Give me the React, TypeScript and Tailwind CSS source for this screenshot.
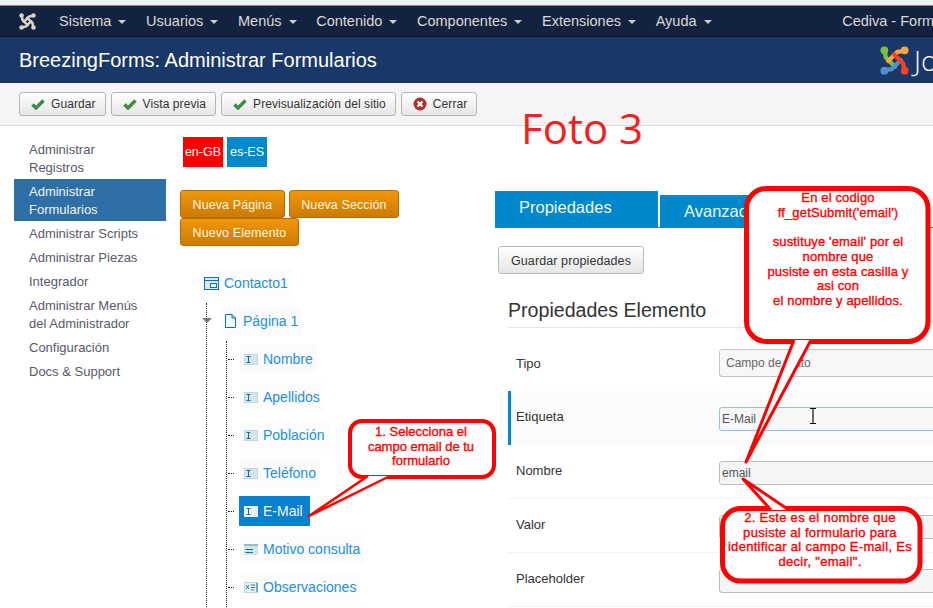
const font = "font-['Liberation_Sans',Arial,sans-serif]";

const navItems = ["Sistema", "Usuarios", "Menús", "Contenido", "Componentes", "Extensiones", "Ayuda"];
const sideItems = [
  { label: ["Administrar", "Registros"] },
  { label: ["Administrar", "Formularios"], active: true },
  { label: ["Administrar Scripts"] },
  { label: ["Administrar Piezas"] },
  { label: ["Integrador"] },
  { label: ["Administrar Menús", "del Administrador"] },
  { label: ["Configuración"] },
  { label: ["Docs & Support"] },
];
const fields = [
  { name: "Nombre", icon: "input" },
  { name: "Apellidos", icon: "input" },
  { name: "Población", icon: "input" },
  { name: "Teléfono", icon: "input" },
  { name: "E-Mail", icon: "input", active: true },
  { name: "Motivo consulta", icon: "select" },
  { name: "Observaciones", icon: "area" },
];

function JoomlaMark({ size, mono }: { size: number; mono?: boolean }) {
  const c = mono
    ? ["#d8d4cc", "#d8d4cc", "#d8d4cc", "#d8d4cc"]
    : ["#7ac143", "#f9a541", "#f44321", "#5091cd"];
  return (
    <svg width={size} height={size} viewBox="0 0 30 30" className="shrink-0">
      <g fill="none" strokeWidth="4.4" strokeLinecap="round" strokeLinejoin="round">
        <path d="M5 5 L6 12 L15.5 21.5" stroke={c[0]} />
        <path d="M25 5 L18 6 L8.5 15.5" stroke={c[1]} />
        <path d="M5 25 L12 24 L21.5 14.5" stroke={c[3]} />
        <path d="M25 25 L24 18 L14.5 8.5" stroke={c[2]} />
      </g>
      <circle cx="4.5" cy="4.5" r="4" fill={c[0]} />
      <circle cx="25.5" cy="4.5" r="4" fill={c[1]} />
      <circle cx="25.5" cy="25.5" r="4" fill={c[2]} />
      <circle cx="4.5" cy="25.5" r="4" fill={c[3]} />
    </svg>
  );
}

function Check() {
  return (
    <svg width="14" height="12" viewBox="0 0 14 12">
      <path d="M1.5 6.5 L5 10 L12.5 2.5" fill="none" stroke="#3f8a45" strokeWidth="3.4" />
    </svg>
  );
}

function CloseIcon() {
  return (
    <svg width="14" height="14" viewBox="0 0 14 14">
      <circle cx="7" cy="7" r="6.5" fill="#a8312d" />
      <path d="M4.5 4.5 L9.5 9.5 M9.5 4.5 L4.5 9.5" stroke="#fff" strokeWidth="2" />
    </svg>
  );
}

function FieldIcon({ kind, active }: { kind: string; active?: boolean }) {
  const fill = active ? "#eef4f6" : "#d6e5ea";
  const blue = "#0a6fb5";
  if (kind === "select") {
    return (
      <svg width="14" height="11" viewBox="0 0 14 11" className="shrink-0">
        <rect x="0" y="0" width="14" height="11" fill={fill} />
        <rect x="0" y="0" width="14" height="2" fill="#9fb8c4" />
        <path d="M1.5 5.5 H9 M1.5 8.5 H9" stroke={blue} strokeWidth="1" />
      </svg>
    );
  }
  if (kind === "area") {
    return (
      <svg width="14" height="11" viewBox="0 0 14 11" className="shrink-0">
        <rect x="0.5" y="0.5" width="13" height="10" fill="#eaf2f5" stroke="#c4d6de" />
        <path d="M2 3 L5 7 M5 3 L2 7 M7 3 H11 M7 5.5 H11 M7 8 H10" stroke={blue} strokeWidth="0.9" />
        <path d="M13 1 V10" stroke={blue} strokeWidth="1" />
      </svg>
    );
  }
  return (
    <svg width="14" height="11" viewBox="0 0 14 11" className="shrink-0">
      <rect x="0.5" y="0.5" width="13" height="10" fill={fill} stroke={active ? "#eef4f6" : "#c4d6de"} />
      <path d="M2.5 2.5 H6.5 M2.5 8.5 H6.5 M4.5 2.5 V8.5" stroke={blue} strokeWidth="1" fill="none" />
    </svg>
  );
}

function NavBar() {
  return (
    <div className="flex h-[31px] items-center border-b border-[#0c1a30] bg-[#13233f] pt-[1px] text-[14.5px] text-[#d9d9d9]">
      <div className="ml-[19px] mr-[23px]">
        <JoomlaMark size={17} mono />
      </div>
      {navItems.map((item) => (
        <div key={item} className="mr-[19.7px] flex items-center gap-[7px] whitespace-nowrap">
          {item}
          <span className="mt-[1px] h-0 w-0 border-x-4 border-t-4 border-x-transparent border-t-[#cccccc]" />
        </div>
      ))}
      <div className="ml-[111px] whitespace-nowrap">Cediva - Formularios</div>
    </div>
  );
}

function Header() {
  return (
    <div className="flex h-[46px] items-center bg-[#1a3867] pl-[19px] text-white">
      <h1 className="w-[861px] shrink-0 text-[20px] leading-none">BreezingForms: Administrar Formularios</h1>
      <JoomlaMark size={29} />
      <span className="ml-[5px] font-['Open_Sans',sans-serif] text-[28px] font-light leading-none">Joomla!</span>
    </div>
  );
}

function ToolButton({ label, icon }: { label: string; icon: "check" | "close" }) {
  return (
    <button className="flex h-[24px] items-center gap-[6px] rounded-[3px] border border-[#b5b5b5] bg-gradient-to-b from-white to-[#e6e6e6] pl-[11px] pr-[9px] text-[12px] tracking-[0.08px] text-[#333333]">
      {icon === "check" ? <Check /> : <CloseIcon />}
      {label}
    </button>
  );
}

function Toolbar() {
  return (
    <div className="flex h-[43px] items-start gap-[5px] border-b border-[#dddddd] bg-[#f5f5f5] pl-[19px] pt-[9px]">
      <ToolButton label="Guardar" icon="check" />
      <ToolButton label="Vista previa" icon="check" />
      <ToolButton label="Previsualización del sitio" icon="check" />
      <ToolButton label="Cerrar" icon="close" />
    </div>
  );
}

function Sidebar() {
  return (
    <ul className="ml-[14px] w-[152px] shrink-0 pt-[11px] text-[13px] leading-[18px] text-[#58586a]">
      {sideItems.map((item) => (
        <li
          key={item.label.join(" ")}
          className={item.active ? "bg-[#2f6fa8] pb-[2px] pl-[15px] pt-[4px] text-[#f2f2f2]" : "pb-[2px] pl-[15px] pt-[4px]"}
        >
          {item.label.map((line) => (
            <div key={line} className="whitespace-nowrap">{line}</div>
          ))}
        </li>
      ))}
    </ul>
  );
}

function OrangeButton({ label }: { label: string }) {
  return (
    <button className="h-[28px] whitespace-nowrap rounded-[3px] border border-[#b86e05] bg-gradient-to-b from-[#f29607] to-[#cc7b02] px-[11.5px] pt-[2px] text-[12.5px] tracking-[0.1px] text-[#fdf5e6]">
      {label}
    </button>
  );
}

function TreeBox({ children, className }: { children: React.ReactNode; className?: string }) {
  return (
    <div className={`flex h-[28px] w-fit items-center gap-[5px] bg-[#fbfbfb] px-[4px] text-[14px] text-[#2490dc] ${className ?? ""}`}>
      {children}
    </div>
  );
}

function Tree() {
  return (
    <div className="mt-[23px]">
      <TreeBox className="ml-[20px] gap-[4px]">
        <svg width="15" height="13" viewBox="0 0 15 13">
          <rect x="0.5" y="0.5" width="14" height="12" fill="#dbe8ee" stroke="#0a6fb5" />
          <path d="M0.5 3.5 H14.5" stroke="#0a6fb5" />
          <rect x="6.5" y="6.5" width="6" height="4" fill="#f4f8fa" stroke="#0a6fb5" />
        </svg>
        Contacto1
      </TreeBox>
      <div className="relative ml-[26px] mt-[6px] border-l border-dotted border-[#222222] pl-[13px] pt-[4px]">
        <span className="absolute left-[-5px] top-[15px] h-0 w-0 border-x-[5px] border-t-[5px] border-x-transparent border-t-[#777777]" />
        <TreeBox className="pl-[5px]">
          <svg width="11" height="14" viewBox="0 0 11 14" className="mr-[2px]">
            <path d="M0.5 0.5 H7 L10.5 4 V13.5 H0.5 Z" fill="#f4f8fa" stroke="#0a6fb5" />
            <path d="M7 0.5 V4 H10.5" fill="none" stroke="#0a6fb5" />
          </svg>
          Página 1
        </TreeBox>
        <ul className="ml-[6px] mt-[6px] border-l border-dotted border-[#222222] pb-[12px] pt-[4px]">
          {fields.map((f) => (
            <li key={f.name} className="mb-[10px] flex items-center pl-[1px]">
              <span className="mr-[6px] w-[6px] border-t border-dotted border-[#222222]" />
              {f.active ? (
                <div className="-mx-[1px] -my-[1px] flex h-[30px] items-center gap-[5px] bg-[#0a81cf] pl-[5px] pr-[7px] text-[14px] text-[#f4f4f4]">
                  <FieldIcon kind={f.icon} active />
                  {f.name}
                </div>
              ) : (
                <TreeBox>
                  <FieldIcon kind={f.icon} />
                  {f.name}
                </TreeBox>
              )}
            </li>
          ))}
        </ul>
      </div>
    </div>
  );
}

function Middle() {
  return (
    <div className="w-[329px] shrink-0 pl-[14px] pt-[11px]">
      <div className="ml-[3px] flex gap-[4px] text-[12.5px] text-white">
        <div className="flex h-[30px] w-[40px] items-center justify-center bg-[#ff0000]">en-GB</div>
        <div className="flex h-[30px] w-[40px] items-center justify-center bg-[#0088cc]">es-ES</div>
      </div>
      <div className="mt-[23px] flex flex-wrap gap-x-[4px]">
        <OrangeButton label="Nueva Página" />
        <OrangeButton label="Nueva Sección" />
        <OrangeButton label="Nuevo Elemento" />
      </div>
      <Tree />
    </div>
  );
}

function PropRow({ label, value, kind }: { label: string; value?: string; kind?: "first" | "focus" }) {
  const rowClass =
    kind === "first"
      ? "h-[54px] pt-[12px] pl-[8px]"
      : kind === "focus"
        ? "h-[54px] pt-[16px] pl-[5px] border-l-[3px] border-[#0088cc] bg-[#fbfbfb]"
        : "h-[54px] pt-[16px] pl-[8px] border-b border-[#f3f3f3]";
  const inputClass =
    kind === "focus"
      ? "h-[24px] border-[#8fc4ee] bg-[#f7f7f7] pl-[2px]"
      : kind === "first"
        ? "h-[28px] border-[#c4c4c4] bg-[#f7f7f7] pl-[6px] text-[#666666]"
        : "h-[24px] border-[#bdbdbd] bg-[#f5f5f5] pl-[2px]";
  return (
    <div className={`flex items-start text-[13px] ${rowClass}`}>
      <div className={`w-[203px] shrink-0 text-[#333333] ${kind === "first" ? "mt-[5px]" : ""}`}>{label}</div>
      <input
        readOnly
        value={value ?? ""}
        className={`w-[300px] rounded-[3px] border text-[12px] text-[#555555] outline-none ${inputClass}`}
      />
    </div>
  );
}

function Properties() {
  return (
    <div className="w-[520px] shrink-0 pt-[65px]">
      <div className="flex items-end gap-[2px] border-b border-[#0088cc] text-[16.5px] text-[#eef7fc]">
        <div className="flex h-[36px] w-[163px] items-center bg-[#0088cc] pb-[4px] pl-[24px]">Propiedades</div>
        <div className="flex h-[32px] w-[165px] items-center bg-[#0088cc] pl-[24px]">Avanzado</div>
      </div>
      <button className="ml-[3px] mt-[18px] h-[28px] w-[146px] rounded-[3px] border border-[#bbbbbb] bg-gradient-to-b from-white to-[#e6e6e6] pt-[2px] text-[12.5px] tracking-[0.1px] text-[#333333]">
        Guardar propiedades
      </button>
      <div className="ml-[13px]">
        <h2 className="mb-[9px] mt-[22px] h-[32px] border-b border-[#e5e5e5] text-[19.6px] leading-[28px] text-[#333333]">
          Propiedades Elemento
        </h2>
        <PropRow label="Tipo" value="Campo de texto" kind="first" />
        <PropRow label="Etiqueta" value="E-Mail" kind="focus" />
        <PropRow label="Nombre" value="email" />
        <PropRow label="Valor" />
        <PropRow label="Placeholder" />
      </div>
    </div>
  );
}

const calloutText =
  "absolute text-center text-[13px] leading-[14.7px] text-[#ff0000] [-webkit-text-stroke:0.35px_#ff0000] whitespace-nowrap";

function Annotations() {
  return (
    <>
      <div className="absolute left-[521px] top-[102px] font-['Open_Sans',sans-serif] text-[42px] leading-[52px] text-[#f22222]">
        Foto 3
      </div>
      <svg width="933" height="608" className="absolute left-0 top-0">
        <g fill="#ffffff" stroke="#ff0000" strokeLinejoin="round">
          <rect x="350" y="421" width="144" height="56" rx="12" strokeWidth="4" />
          <path strokeWidth="2.5" d="M368 476 L309 516 L390 476" />
          <rect x="746.5" y="188.5" width="181.5" height="153" rx="20" strokeWidth="5" />
          <path strokeWidth="3" d="M794 340 L746 462 L811 340" />
          <rect x="722.5" y="508.5" width="197.5" height="72.5" rx="18" strokeWidth="5" />
          <path strokeWidth="3" d="M771 510 L743 479 L789 510" />
        </g>
        <path d="M810 408.5 H816 M813 408.5 V423.5 M810 423.5 H816" stroke="#111111" strokeWidth="1.2" fill="none" />
      </svg>
      <div className={`${calloutText} left-[353px] top-[425px] w-[136px]`}>
        <div>1. Selecciona el</div>
        <div>campo email de tu</div>
        <div>formulario</div>
      </div>
      <div className={`${calloutText} left-[752px] top-[191px] w-[172px] tracking-[0.15px]`}>
        <div>En el codigo</div>
        <div>ff_getSubmit('email')</div>
        <div className="h-[14.7px]" />
        <div>sustituye 'email' por el</div>
        <div>nombre que</div>
        <div>pusiste en esta casilla y</div>
        <div>asi con</div>
        <div>el nombre y apellidos.</div>
      </div>
      <div className={`${calloutText} left-[725px] top-[511px] w-[190px] tracking-[0.3px]`}>
        <div>2. Este es el nombre que</div>
        <div>pusiste al formulario para</div>
        <div>identificar al campo E-mail, Es</div>
        <div>decir, "email".</div>
      </div>
    </>
  );
}

export default function App() {
  return (
    <div className={`relative h-[608px] w-[933px] overflow-hidden bg-white ${font}`}>
      <div className="h-[6px] border-b border-[#8a8a8a] bg-[#f0f0f0]" />
      <NavBar />
      <Header />
      <Toolbar />
      <div className="flex">
        <Sidebar />
        <Middle />
        <Properties />
      </div>
      <Annotations />
    </div>
  );
}
